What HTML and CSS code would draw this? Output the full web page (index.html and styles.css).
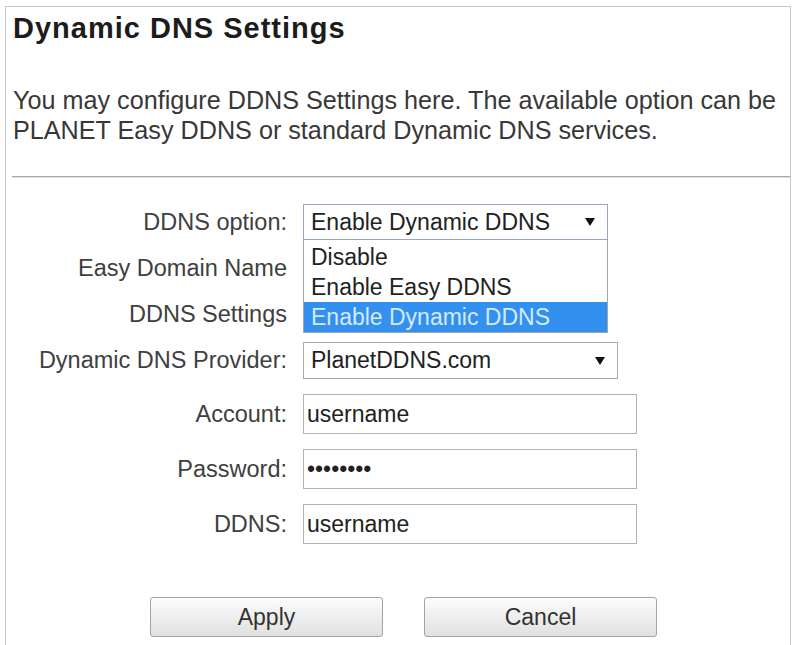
FILE: index.html
```html
<!DOCTYPE html>
<html lang="en">
<head>
  <meta charset="UTF-8">
  <title>Dynamic DNS Settings</title>
  <link rel="stylesheet" href="styles.css">
</head>
<body>

  <div class="panel">

    <!-- Header -->
    <div class="intro">
      <h1>Dynamic DNS Settings</h1>
      <p>You may configure DDNS Settings here. The available option can be PLANET Easy DDNS or standard Dynamic DNS services.</p>
    </div>
    <div class="rule"></div>

    <!-- Settings form -->
    <form class="fields" onsubmit="return false">
      <div class="row">
        <label>DDNS option:</label>
        <div class="dropdown">
          <div class="select focus"><span>Enable Dynamic DDNS</span><i class="arrow"></i></div>
          <ul class="menu">
            <li>Disable</li>
            <li>Enable Easy DDNS</li>
            <li class="picked">Enable Dynamic DDNS</li>
          </ul>
        </div>
      </div>

      <div class="row near">
        <label>Easy Domain Name</label>
      </div>

      <div class="row near">
        <label>DDNS Settings</label>
      </div>

      <div class="row near">
        <label>Dynamic DNS Provider:</label>
        <div class="select wide"><span>PlanetDDNS.com</span><i class="arrow"></i></div>
      </div>

      <div class="row">
        <label for="account">Account:</label>
        <input type="text" id="account" value="username">
      </div>

      <div class="row">
        <label for="password">Password:</label>
        <input type="password" id="password" value="abcdefgh">
      </div>

      <div class="row">
        <label for="ddns">DDNS:</label>
        <input type="text" id="ddns" value="username">
      </div>

      <div class="actions">
        <button type="button">Apply</button>
        <button type="button">Cancel</button>
      </div>
    </form>

  </div>

</body>
</html>
```

FILE: styles.css
```css
* {
  box-sizing: border-box;
}

html, body {
  margin: 0;
  overflow: hidden;
}

body {
  font-family: "Liberation Sans", Arial, sans-serif;
  background: #fff;
  color: #333;
}

.panel {
  margin: 6px 0 0 5px;
  width: 786px;
  height: 639px;
  border: 1px solid #c8c8c8;
  border-bottom: none;
}

.intro {
  padding-left: 7px;
}

h1 {
  margin: 5px 0 0;
  font-size: 29px;
  line-height: 32px;
  letter-spacing: 1px;
  color: #1c1c1c;
}

.intro p {
  margin: 41px 0 31px;
  font-size: 25.2px;
  line-height: 30px;
  color: #383838;
}

.rule {
  margin-left: 6px;
  border-top: 1px solid #a9a9a9;
  border-bottom: 1px solid #e2e2e2;
}

.fields {
  padding-top: 26px;
}

.row {
  display: flex;
  align-items: center;
  min-height: 36px;
  margin-top: 15px;
}

.row:first-child {
  margin-top: 0;
}

.row.near {
  margin-top: 10px;
}

.row label {
  width: 281px;
  margin-right: 16px;
  flex-shrink: 0;
  text-align: right;
  font-size: 23.5px;
  color: #404040;
}

.dropdown {
  position: relative;
}

.select {
  display: flex;
  align-items: center;
  justify-content: space-between;
  width: 305px;
  height: 36px;
  padding: 0 12px 0 7px;
  border: 1px solid #aaa;
  font-size: 23px;
  color: #222;
  background: #fff;
}

.select.focus {
  border-color: #97a6c6;
}

.select.wide {
  width: 315px;
  height: 37px;
}

.arrow {
  width: 0;
  height: 0;
  border-left: 5px solid transparent;
  border-right: 5px solid transparent;
  border-top: 8px solid #111;
}

.menu {
  position: absolute;
  top: 100%;
  left: 0;
  width: 100%;
  margin: 0;
  padding: 2px 0 0;
  list-style: none;
  background: #fff;
  border: 1px solid #a6a6a6;
  border-top: none;
}

.menu li {
  height: 30px;
  line-height: 30px;
  padding-left: 7px;
  font-size: 23px;
  color: #222;
}

.menu li.picked {
  background: #3390ef;
  color: #d4eaff;
}

input[type="text"],
input[type="password"] {
  width: 334px;
  height: 40px;
  margin: 0;
  padding: 0 3px;
  border: 1px solid #b3b3b3;
  font-family: "Liberation Sans", Arial, sans-serif;
  font-size: 23px;
  color: #222;
}

.actions {
  display: flex;
  gap: 41px;
  margin-top: 53px;
  padding-left: 144px;
}

button {
  width: 233px;
  height: 40px;
  font-family: "Liberation Sans", Arial, sans-serif;
  font-size: 23px;
  color: #333;
  background: linear-gradient(#fdfdfd, #e0e0e0);
  border: 1px solid #a3a3a3;
  border-radius: 3px;
}
```
